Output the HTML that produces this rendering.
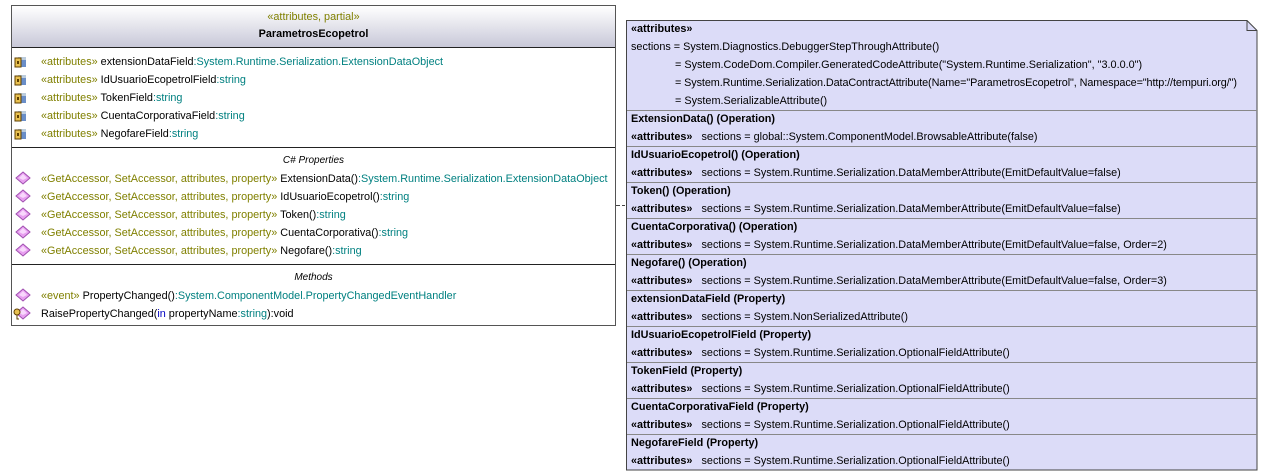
<!DOCTYPE html>
<html><head><meta charset="utf-8"><style>
body{margin:0;width:1272px;height:476px;background:#fff;position:relative;overflow:hidden;font-family:"Liberation Sans","DejaVu Sans",sans-serif;font-size:10.85px;color:#000}
.a{position:absolute;white-space:nowrap;line-height:14px;height:14px}
.s{color:#808000}.t{color:#008080}.k{color:#0000c0}
.box{position:absolute;left:11px;top:5px;width:603px;height:319px;border:1px solid #555;background:#fff}
.hd{position:absolute;left:0;top:0;width:603px;height:41px;background:linear-gradient(#fff,#c8c8d8);border-bottom:1px solid #222}
.ln{position:absolute;left:0;width:603px;height:0;border-top:1px solid #222}
.nl{position:absolute;left:627px;width:630px;border-top:1px solid #888}
.b{font-weight:bold}
</style></head><body>
<div class="box">
 <div class="hd"></div>
 <div class="a s" style="left:0;width:603px;text-align:center;top:4px">«attributes, partial»</div>
 <div class="a b" style="left:0;width:603px;text-align:center;top:21px">ParametrosEcopetrol</div>
 <div class="ln" style="top:141px"></div>
 <div class="ln" style="top:258px"></div>
 <div class="a" style="left:0;width:603px;text-align:center;top:148px;font-style:italic;font-size:10px">C# Properties</div>
 <div class="a" style="left:0;width:603px;text-align:center;top:265px;font-style:italic;font-size:10px">Methods</div>
</div>
<svg width="30" height="476" style="position:absolute;left:11px;top:0">
 <defs>
  <g id="f"><rect x="7" y="-5" width="8" height="10" fill="#6a8ec8"/><rect x="7" y="-5" width="8" height="3" fill="#bcd"/><rect x="4" y="-4" width="6" height="9" fill="#e8c050" stroke="#604000" stroke-width="1"/><rect x="6" y="-1" width="2" height="3" fill="#604000"/></g>
  <g id="d"><path d="M12,-6 L19,0 L12,6 L5,0 Z" fill="#e8a0f0" stroke="#a050b0" stroke-width="1"/><path d="M12,-4 L16,0 L12,2 L8,0Z" fill="#f8d8fc"/></g>
 </defs>
 <use href="#f" y="62"/><use href="#f" y="80"/><use href="#f" y="98"/><use href="#f" y="116"/><use href="#f" y="134"/>
 <use href="#d" y="178"/><use href="#d" y="196"/><use href="#d" y="214"/><use href="#d" y="232"/><use href="#d" y="250"/>
 <use href="#d" y="295"/><use href="#d" y="313"/>
 <circle cx="6" cy="312" r="3" fill="#e8c050" stroke="#604000"/><path d="M6,315 v4 h2" stroke="#604000" fill="none"/>
</svg>
<div class="a" style="left:41px;top:55px"><span class="s">«attributes»</span> extensionDataField<span class="t">:System.Runtime.Serialization.ExtensionDataObject</span></div>
<div class="a" style="left:41px;top:73px"><span class="s">«attributes»</span> IdUsuarioEcopetrolField<span class="t">:string</span></div>
<div class="a" style="left:41px;top:91px"><span class="s">«attributes»</span> TokenField<span class="t">:string</span></div>
<div class="a" style="left:41px;top:109px"><span class="s">«attributes»</span> CuentaCorporativaField<span class="t">:string</span></div>
<div class="a" style="left:41px;top:127px"><span class="s">«attributes»</span> NegofareField<span class="t">:string</span></div>
<div class="a" style="left:41px;top:172px"><span class="s">«GetAccessor, SetAccessor, attributes, property»</span> ExtensionData()<span class="t">:System.Runtime.Serialization.ExtensionDataObject</span></div>
<div class="a" style="left:41px;top:190px"><span class="s">«GetAccessor, SetAccessor, attributes, property»</span> IdUsuarioEcopetrol()<span class="t">:string</span></div>
<div class="a" style="left:41px;top:208px"><span class="s">«GetAccessor, SetAccessor, attributes, property»</span> Token()<span class="t">:string</span></div>
<div class="a" style="left:41px;top:226px"><span class="s">«GetAccessor, SetAccessor, attributes, property»</span> CuentaCorporativa()<span class="t">:string</span></div>
<div class="a" style="left:41px;top:244px"><span class="s">«GetAccessor, SetAccessor, attributes, property»</span> Negofare()<span class="t">:string</span></div>
<div class="a" style="left:41px;top:289px"><span class="s">«event»</span> PropertyChanged()<span class="t">:System.ComponentModel.PropertyChangedEventHandler</span></div>
<div class="a" style="left:41px;top:307px">RaisePropertyChanged(<span class="k">in</span> propertyName<span class="t">:string</span>):void</div>

<svg width="632" height="451" style="left:626px;top:20px;position:absolute">
 <path d="M0.5,0.5 H621 L631,10.5 V450 H0.5 Z" fill="#dcdcf8" stroke="#444"/>
 <path d="M621,0.5 V10.5 H631" fill="none" stroke="#444"/>
</svg>
<div style="position:absolute;left:616px;top:205px;width:4px;border-top:1px solid #444"></div>
<div style="position:absolute;left:622px;top:205px;width:3px;border-top:1px solid #444"></div>
<div class="nl" style="top:110px"></div><div class="nl" style="top:146px"></div><div class="nl" style="top:182px"></div><div class="nl" style="top:218px"></div><div class="nl" style="top:254px"></div><div class="nl" style="top:290px"></div><div class="nl" style="top:326px"></div><div class="nl" style="top:362px"></div><div class="nl" style="top:398px"></div><div class="nl" style="top:434px"></div>
<div class="a b" style="left:631px;top:22px">«attributes»</div>
<div class="a" style="left:631px;top:40px">sections = System.Diagnostics.DebuggerStepThroughAttribute()</div>
<div class="a" style="left:675px;top:58px">= System.CodeDom.Compiler.GeneratedCodeAttribute("System.Runtime.Serialization", "3.0.0.0")</div>
<div class="a" style="left:675px;top:76px;letter-spacing:-0.1px">= System.Runtime.Serialization.DataContractAttribute(Name="ParametrosEcopetrol", Namespace="http://tempuri.org/")</div>
<div class="a" style="left:675px;top:94px">= System.SerializableAttribute()</div>
<div class="a b" style="left:631px;top:112px">ExtensionData() (Operation)</div>
<div class="a" style="left:631px;top:130px"><b>«attributes»</b>&nbsp;&nbsp;&nbsp;sections = global::System.ComponentModel.BrowsableAttribute(false)</div>
<div class="a b" style="left:631px;top:148px">IdUsuarioEcopetrol() (Operation)</div>
<div class="a" style="left:631px;top:166px"><b>«attributes»</b>&nbsp;&nbsp;&nbsp;sections = System.Runtime.Serialization.DataMemberAttribute(EmitDefaultValue=false)</div>
<div class="a b" style="left:631px;top:184px">Token() (Operation)</div>
<div class="a" style="left:631px;top:202px"><b>«attributes»</b>&nbsp;&nbsp;&nbsp;sections = System.Runtime.Serialization.DataMemberAttribute(EmitDefaultValue=false)</div>
<div class="a b" style="left:631px;top:220px">CuentaCorporativa() (Operation)</div>
<div class="a" style="left:631px;top:238px"><b>«attributes»</b>&nbsp;&nbsp;&nbsp;sections = System.Runtime.Serialization.DataMemberAttribute(EmitDefaultValue=false, Order=2)</div>
<div class="a b" style="left:631px;top:256px">Negofare() (Operation)</div>
<div class="a" style="left:631px;top:274px"><b>«attributes»</b>&nbsp;&nbsp;&nbsp;sections = System.Runtime.Serialization.DataMemberAttribute(EmitDefaultValue=false, Order=3)</div>
<div class="a b" style="left:631px;top:292px">extensionDataField (Property)</div>
<div class="a" style="left:631px;top:310px"><b>«attributes»</b>&nbsp;&nbsp;&nbsp;sections = System.NonSerializedAttribute()</div>
<div class="a b" style="left:631px;top:328px">IdUsuarioEcopetrolField (Property)</div>
<div class="a" style="left:631px;top:346px"><b>«attributes»</b>&nbsp;&nbsp;&nbsp;sections = System.Runtime.Serialization.OptionalFieldAttribute()</div>
<div class="a b" style="left:631px;top:364px">TokenField (Property)</div>
<div class="a" style="left:631px;top:382px"><b>«attributes»</b>&nbsp;&nbsp;&nbsp;sections = System.Runtime.Serialization.OptionalFieldAttribute()</div>
<div class="a b" style="left:631px;top:400px">CuentaCorporativaField (Property)</div>
<div class="a" style="left:631px;top:418px"><b>«attributes»</b>&nbsp;&nbsp;&nbsp;sections = System.Runtime.Serialization.OptionalFieldAttribute()</div>
<div class="a b" style="left:631px;top:436px">NegofareField (Property)</div>
<div class="a" style="left:631px;top:454px"><b>«attributes»</b>&nbsp;&nbsp;&nbsp;sections = System.Runtime.Serialization.OptionalFieldAttribute()</div>
</body></html>
